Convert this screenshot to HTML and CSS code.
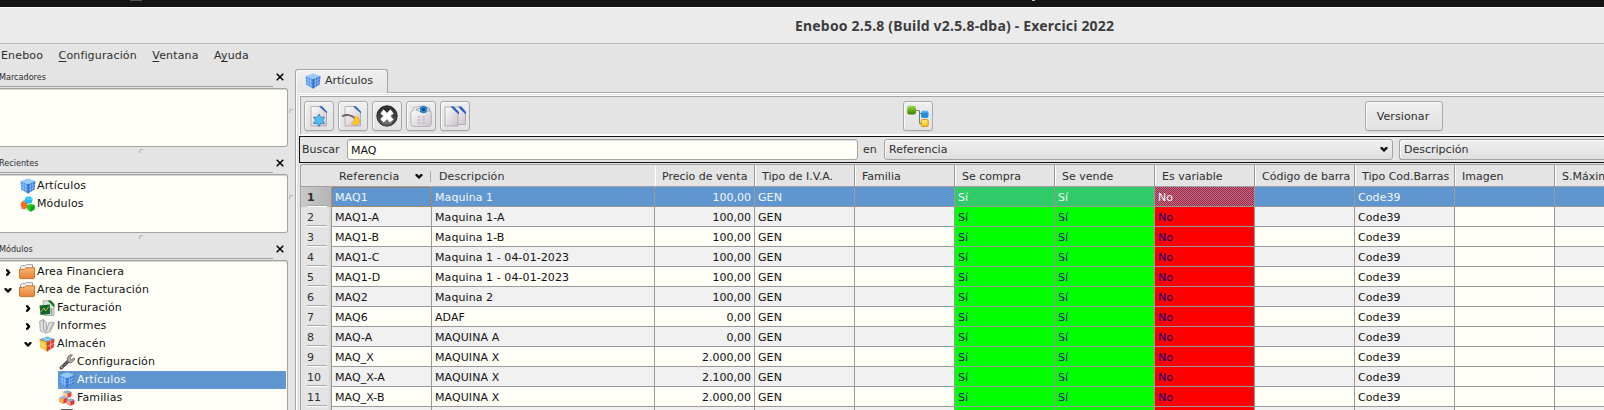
FILE: index.html
```html
<!DOCTYPE html>
<html lang="es">
<head>
<meta charset="utf-8">
<title>Eneboo 2.5.8</title>
<link rel="stylesheet" href="styles.css">
</head>
<body>
<svg class="defs" width="0" height="0">
  <defs>
    <linearGradient id="folderFill" x1="0" y1="0" x2="0" y2="1"><stop offset="0" stop-color="#f9b876"/><stop offset="1" stop-color="#e68033"/></linearGradient>
    <linearGradient id="pageFill" x1="0" y1="0" x2="1" y2="1"><stop offset="0" stop-color="#fdfbfd"/><stop offset="1" stop-color="#cbc3ca"/></linearGradient>
    <linearGradient id="foldFill" x1="0" y1="1" x2="1" y2="0"><stop offset="0" stop-color="#7fb2ee"/><stop offset=".5" stop-color="#1f56b4"/><stop offset="1" stop-color="#5b94dc"/></linearGradient>
    <radialGradient id="darkFill" cx=".5" cy=".8" r=".8"><stop offset="0" stop-color="#777"/><stop offset="1" stop-color="#161616"/></radialGradient>
    <linearGradient id="greenFill" x1="0" y1="0" x2="0" y2="1"><stop offset="0" stop-color="#a4dc5c"/><stop offset=".45" stop-color="#6bb31c"/><stop offset="1" stop-color="#3f7c08"/></linearGradient>
    <linearGradient id="blueFill" x1="0" y1="0" x2="0" y2="1"><stop offset="0" stop-color="#7cc4f2"/><stop offset=".45" stop-color="#1f8ada"/><stop offset="1" stop-color="#2795dc"/></linearGradient>
    <linearGradient id="yellowFill" x1="0" y1="0" x2="0" y2="1"><stop offset="0" stop-color="#fff27a"/><stop offset="1" stop-color="#f2c200"/></linearGradient>
    <symbol id="cube" viewBox="0 0 16 16">
      <path d="M.5 3.300 8 .5 15.500 3 8 6.300z" fill="#8cc8fb"/>
      <path d="M.5 3.300 8 6.300 8 15.500 1.300 11.800z" fill="#4f97ee"/>
      <path d="M15.500 3 8 6.300 8 15.500 14.600 11.500z" fill="#3a76d6"/>
      <path d="M2.900 4.300l.6 8.700M5.400 5.400l.4 8.900M.8 6.200l7.200 3L15.200 6M1 9l7 3.300L15 8.800M10.500 5.300l-.2 8.600M13 4.200l-.4 8.300M3.100 2.500 10.500 5.200M5.600 1.500l7.400 2.600M10.500 1.400 3 4.300M13 2.200 5.400 5.300" fill="none" stroke="#a5d0fb" stroke-width=".6"/>
      <path d="M8 6.300v9.200" stroke="#2559ae" stroke-width=".8"/>
    </symbol>
    <symbol id="cubecolor" viewBox="0 0 16 16">
      <path d="M.5 3.300 8 .5 15.500 3 8 6.300z" fill="#62b4ef"/>
      <path d="M.5 3.300 8 6.300 8 15.500 1.300 11.800z" fill="#f6c92c"/>
      <path d="M15.500 3 8 6.300 8 15.500 14.600 11.500z" fill="#e23a36"/>
      <path d="M4.300 5v8.500M1 7.600l7 3L15 7M11.700 4.700v8.600M4.500 2 11.500 4.700M12 2 4.300 5" fill="none" stroke="#f3e3c8" stroke-width=".6"/>
      <path d="M.5 3.300 8 6.300 15.500 3M8 6.300v9.200" fill="none" stroke="#8f4b24" stroke-width=".6"/>
    </symbol>
    <symbol id="modules" viewBox="0 0 16 16">
      <path d="M3 4.500 7.500 6.500 8 11.500 4.500 13.500 1.500 12.500.5 7.500z" fill="#f4712c"/>
      <path d="M6 .8 10.500.5 12.700 3 11.800 7 7.500 7.800 4 5z" fill="#1fc0f5"/>
      <path d="M6 .8 8 3.200 12.700 3" fill="none" stroke="#7ee2ff" stroke-width=".7"/>
      <path d="M7 9.500 10.500 7.800 14.700 9 14.500 13.500 10.500 15.800 7.200 13.500z" fill="#14cf21"/>
      <path d="M10.600 11 14.700 9 14.500 13.500 10.500 15.800z" fill="#0da51a"/>
    </symbol>
    <symbol id="folder" viewBox="0 0 16 16">
      <path d="M1.500 6V3l1-1.300h4l1.200-1H13.500V5" fill="#fdfdfd" stroke="#999" stroke-width="1"/>
      <path d="M.5 5.300H5.300l1.500-1.600h8.700v10.200l-.7.700H1.200l-.7-.7z" fill="url(#folderFill)" stroke="#c96a20" stroke-width=".9"/>
    </symbol>
    <symbol id="invoice" viewBox="0 0 16 16">
      <path d="M4 .8h7.500L15 4v11.500H5z" fill="#dce6dc" stroke="#8a988a" stroke-width=".7"/>
      <path d="M8.500.5h3.500L15.300 4v3.500z" fill="#19782a"/>
      <path d="M.5 5.500 11 4.500V14L1.500 15z" fill="#14662a"/>
      <path d="M1.500 12 5 8l1.500 3L10 6.500" fill="none" stroke="#b5c84b" stroke-width=".9"/>
      <path d="M12.500 8v6.500" stroke="#9aa69a" stroke-width="2"/>
    </symbol>
    <symbol id="book" viewBox="0 0 16 16">
      <path d="M.7 3 4.500 1.500 7.500 4.500v8L10 4.500l4.500-.5.8.8-4 8.700-4.300 1.700L1.300 13z" fill="#dedee0" stroke="#98989c" stroke-width=".8"/>
      <path d="M4.500 1.500v9.500L7.200 14.300M11 12l3.500-7" fill="none" stroke="#9b9ba0" stroke-width=".9"/>
    </symbol>
    <symbol id="wrench" viewBox="0 0 16 16">
      <path d="M2.200 13.800 9.500 7" stroke="#444" stroke-width="3.200" stroke-linecap="round"/>
      <path d="M3 13 10 6.500" stroke="#777" stroke-width="1"/>
      <path d="M13.500.8 10.500 1 8.200 4l.4 3.600L12 9l3.500-3-.2-2-3 1.700-1.200-1.600z" fill="#aaa" stroke="#666" stroke-width=".8"/>
      <circle cx="2.800" cy="13.300" r=".8" fill="#ddd"/>
    </symbol>
    <symbol id="families" viewBox="0 0 16 16">
      <path d="M4 2 8.500.5 12.500 2v4.500L8.500 8 4 6.500z" fill="#e44b42"/><path d="M4 2 8.500.5 12.500 2 8.500 3.500z" fill="#6dbdf2"/><path d="M4 2v4.500L8.500 8V3.500z" fill="#f9cfa0"/>
      <path d="M.5 7.500 4.500 6 8.500 7.500V12l-4 1.800-4-1.800z" fill="#dc3b3b"/><path d="M.5 7.500 4.500 6l4 1.500-4 1.500z" fill="#8cc3ee"/><path d="M.5 7.500V12l4 1.800V9z" fill="#f7b64b"/>
      <path d="M7.500 10 11.500 8.500 15.500 10v4l-4 1.700-4-1.700z" fill="#e03434"/><path d="M7.500 10 11.500 8.500l4 1.500-4 1.500z" fill="#72baf0"/><path d="M7.500 10v4l4 1.700v-4.200z" fill="#f4a19a"/>
    </symbol>
    <symbol id="partial" viewBox="0 0 16 16"><path d="M3 2h10v12H3z" fill="#bbb" stroke="#222" stroke-width="1.600"/></symbol>
    <symbol id="right" viewBox="0 0 7 7"><path d="M1.500.3h2L6 3.500 3.500 6.700H1.500V5.300L3.200 3.500 1.500 1.700z" fill="#000"/></symbol>
    <symbol id="down" viewBox="0 0 8 7"><path d="M.5 1h1.800L4 2.700 5.700 1h1.800v1.800L4 6 .5 2.800z" fill="#111"/></symbol>
    <symbol id="close" viewBox="0 0 8 8"><path d="M.7.7 7.300 7.300M7.300.7.700 7.300" stroke="#000" stroke-width="1.500"/></symbol>
    <symbol id="page" viewBox="0 0 22 22">
      <path d="M3 1.500h10.500l5 5v14.500H3z" fill="url(#pageFill)" stroke="#aaa2aa" stroke-width=".8"/>
      <path d="M11 1.200h3l5 5.500v1.500q-4-3-8-7z" fill="url(#foldFill)"/>
    </symbol>
  </defs>
</svg>

<div class="desktop-bar"><i class="notch"></i><i class="notch comma"></i></div>
<header class="titlebar"><span>Eneboo 2.5.8 (Build v2.5.8-dba) - Exercici 2022</span></header>

<div class="window">
  <aside class="docks">
    <nav class="menu"><span>Eneboo</span><span><u>C</u>onfiguración</span><span><u>V</u>entana</span><span>A<u>y</u>uda</span></nav>
    <section class="dock first">
      <div class="dock-title"><span>Marcadores</span><svg><use href="#close"/></svg></div>
      <div class="list"></div>
    </section>
    <section class="dock">
      <i class="grip"></i>
      <div class="dock-title"><span>Recientes</span><svg><use href="#close"/></svg></div>
      <div class="list">
        <div class="item recent"><svg><use href="#cube"/></svg><span>Artículos</span></div>
        <div class="item recent"><svg><use href="#modules"/></svg><span>Módulos</span></div>
      </div>
    </section>
    <section class="dock grow">
      <i class="grip"></i>
      <div class="dock-title"><span>Módulos</span><svg><use href="#close"/></svg></div>
      <div class="list tree">
        <div class="item"><svg class="arrow"><use href="#right"/></svg><svg><use href="#folder"/></svg><span>Area Financiera</span></div>
        <div class="item"><svg class="arrow"><use href="#down"/></svg><svg><use href="#folder"/></svg><span>Area de Facturación</span></div>
        <div class="item l1"><svg class="arrow"><use href="#right"/></svg><svg><use href="#invoice"/></svg><span>Facturación</span></div>
        <div class="item l1"><svg class="arrow"><use href="#right"/></svg><svg><use href="#book"/></svg><span>Informes</span></div>
        <div class="item l1"><svg class="arrow"><use href="#down"/></svg><svg><use href="#cubecolor"/></svg><span>Almacén</span></div>
        <div class="item l2"><svg><use href="#wrench"/></svg><span>Configuración</span></div>
        <div class="item l2 selected"><svg><use href="#cube"/></svg><span>Artículos</span></div>
        <div class="item l2"><svg><use href="#families"/></svg><span>Familias</span></div>
        <div class="item l2"><svg><use href="#partial"/></svg></div>
      </div>
    </section>
  </aside>
  <div class="splitter"><i class="grip"></i><i class="grip"></i></div>

  <main class="workspace">
    <div class="tabs"><div class="tab"><svg><use href="#cube"/></svg><span>Artículos</span></div><div class="tab-line"></div></div>
    <div class="pane">
      <div class="toolbar">
        <div class="tools">
          <div class="button"><svg viewBox="0 0 22 22"><use href="#page"/><path d="M11 9l1.800 3.300 3.700-.2-1.900 3.200 1.900 3.200-3.700-.2-1.800 3.200-1.800-3.200-3.700.2 1.900-3.200-1.900-3.200 3.700.2z" fill="#55bdf0" stroke="#1b72b8" stroke-width=".7"/></svg></div>
          <div class="button"><svg viewBox="0 0 22 22"><use href="#page"/><path d="M0 11.500q3-2 7-1.300 4 .7 6.500 3.800" fill="none" stroke="#6a625e" stroke-width="1.800"/><path d="M12.500 11.500q4.500 0 5 3.500t-2 4.500q-3.500 1.200-6.500-1 4-1 3.500-7z" fill="#ffc928" stroke="#d99a11" stroke-width=".6"/></svg></div>
          <div class="button"><svg viewBox="0 0 22 22"><circle cx="11" cy="11" r="10.200" fill="url(#darkFill)" stroke="#111" stroke-width=".8"/><circle cx="11" cy="11" r="8.800" fill="none" stroke="#555" stroke-width=".7"/><path d="M4.500 8.500 7.500 4.500 11 8 14.500 4.500 17.500 8.500 14.500 11 17.500 14.500 14 17.500 11 14.200 7.500 17.500 4.500 14 7.500 11z" fill="#fff" stroke="#ccc" stroke-width=".4"/></svg></div>
          <div class="button"><svg viewBox="0 0 22 22"><rect x=".8" y="5.500" width="20.500" height="16" rx="3" fill="url(#pageFill)" stroke="#b2aab1" stroke-width=".9"/><path d="M3 5.700V2.500q8-3 16 0v3.200" fill="#eee9ed" stroke="#b2aab1" stroke-width=".8"/><path d="M7.500 12h3m1.500 0h3M7.500 15h3m1.500 0h3M7.500 18h3m1.500 0h3" stroke="#b1a9b0" stroke-width=".9"/><path d="M6 4.500Q13 .5 20.500 5 13 10 6 4.500z" fill="#e9f3fb" stroke="#8c8c94" stroke-width=".8"/><circle cx="13.500" cy="4.500" r="3.700" fill="#2386d3"/><circle cx="13.500" cy="4.500" r="1.500" fill="#123666"/></svg></div>
          <div class="button"><svg viewBox="0 0 22 22"><path d="M8 2h8.500l5 5v12.500H8z" fill="url(#pageFill)" stroke="#aaa2aa" stroke-width=".8"/><path d="M14 1.500h3.500l4.500 5.500v2.500q-4-3-8-8z" fill="url(#foldFill)"/><path d="M1 2h8l5 5v14H1z" fill="url(#pageFill)" stroke="#aaa2aa" stroke-width=".8"/><path d="M6.500 1.500H10l5 5.500v2.500q-4-3-8.500-8z" fill="url(#foldFill)"/></svg></div>
        </div>
        <div class="button"><svg viewBox="0 0 22 22"><path d="M9 5.500h3.500v13H14M12.500 8.500H15" fill="none" stroke="#777" stroke-width="1"/><rect x=".3" y=".8" width="8.700" height="8.700" rx="2" fill="url(#greenFill)"/><rect x="14" y="5.500" width="7.500" height="7.500" rx="2" fill="url(#blueFill)"/><rect x="14.200" y="14.500" width="7" height="7" rx="1.500" fill="url(#yellowFill)" stroke="#d78a1c" stroke-width=".9"/></svg></div>
        <div class="button text">Versionar</div>
      </div>
      <div class="search">
        <label>Buscar</label>
        <div class="input">MAQ</div>
        <span class="in">en</span>
        <div class="select"><span>Referencia</span><svg class="arrow"><use href="#down"/></svg></div>
        <div class="select second"><span>Descripción</span></div>
      </div>
      <div class="grid-frame">
      <table>
        <colgroup><col class="cn"><col class="c"><col class="cd"><col class="c"><col class="c"><col class="c"><col class="c"><col class="c"><col class="c"><col class="c"><col class="c"><col class="c"><col class="c"></colgroup>
        <thead><tr><th class="corner"></th><th class="sorted"><div>Referencia<svg class="arrow"><use href="#down"/></svg></div></th><th class="nosep">Descripción</th><th>Precio de venta</th><th>Tipo de I.V.A.</th><th>Familia</th><th>Se compra</th><th>Se vende</th><th>Es variable</th><th>Código de barra</th><th>Tipo Cod.Barras</th><th>Imagen</th><th>S.Máximo</th></tr></thead>
        <tbody>
          <tr class="current"><th><b>1</b></th><td class="focus">MAQ1</td><td>Maquina 1</td><td class="num">100,00</td><td>GEN</td><td></td><td class="yes">Sí</td><td class="yes">Sí</td><td class="no">No</td><td></td><td>Code39</td><td></td><td></td></tr>
          <tr><th><b>2</b></th><td>MAQ1-A</td><td>Maquina 1-A</td><td class="num">100,00</td><td>GEN</td><td></td><td class="yes">Sí</td><td class="yes">Sí</td><td class="no">No</td><td></td><td>Code39</td><td class="img"></td><td></td></tr>
          <tr><th><b>3</b></th><td>MAQ1-B</td><td>Maquina 1-B</td><td class="num">100,00</td><td>GEN</td><td></td><td class="yes">Sí</td><td class="yes">Sí</td><td class="no">No</td><td></td><td>Code39</td><td class="img"></td><td></td></tr>
          <tr><th><b>4</b></th><td>MAQ1-C</td><td>Maquina 1 - 04-01-2023</td><td class="num">100,00</td><td>GEN</td><td></td><td class="yes">Sí</td><td class="yes">Sí</td><td class="no">No</td><td></td><td>Code39</td><td class="img"></td><td></td></tr>
          <tr><th><b>5</b></th><td>MAQ1-D</td><td>Maquina 1 - 04-01-2023</td><td class="num">100,00</td><td>GEN</td><td></td><td class="yes">Sí</td><td class="yes">Sí</td><td class="no">No</td><td></td><td>Code39</td><td class="img"></td><td></td></tr>
          <tr><th><b>6</b></th><td>MAQ2</td><td>Maquina 2</td><td class="num">100,00</td><td>GEN</td><td></td><td class="yes">Sí</td><td class="yes">Sí</td><td class="no">No</td><td></td><td>Code39</td><td class="img"></td><td></td></tr>
          <tr><th><b>7</b></th><td>MAQ6</td><td>ADAF</td><td class="num">0,00</td><td>GEN</td><td></td><td class="yes">Sí</td><td class="yes">Sí</td><td class="no">No</td><td></td><td>Code39</td><td class="img"></td><td></td></tr>
          <tr><th><b>8</b></th><td>MAQ-A</td><td>MAQUINA A</td><td class="num">0,00</td><td>GEN</td><td></td><td class="yes">Sí</td><td class="yes">Sí</td><td class="no">No</td><td></td><td>Code39</td><td class="img"></td><td></td></tr>
          <tr><th><b>9</b></th><td>MAQ_X</td><td>MAQUINA X</td><td class="num">2.000,00</td><td>GEN</td><td></td><td class="yes">Sí</td><td class="yes">Sí</td><td class="no">No</td><td></td><td>Code39</td><td class="img"></td><td></td></tr>
          <tr><th><b>10</b></th><td>MAQ_X-A</td><td>MAQUINA X</td><td class="num">2.100,00</td><td>GEN</td><td></td><td class="yes">Sí</td><td class="yes">Sí</td><td class="no">No</td><td></td><td>Code39</td><td class="img"></td><td></td></tr>
          <tr><th><b>11</b></th><td>MAQ_X-B</td><td>MAQUINA X</td><td class="num">2.000,00</td><td>GEN</td><td></td><td class="yes">Sí</td><td class="yes">Sí</td><td class="no">No</td><td></td><td>Code39</td><td class="img"></td><td></td></tr>
          <tr><th></th><td></td><td></td><td></td><td></td><td></td><td class="yes"></td><td class="yes"></td><td class="no"></td><td></td><td></td><td class="img"></td><td></td></tr>
        </tbody>
      </table>
      </div>
    </div>
  </main>
</div>
</body>
</html>
```
FILE: styles.css
```css
* { box-sizing: border-box; }
html, body { height: 410px; overflow: hidden; }
body {
  margin: 0;
  width: 1604px;
  display: flex;
  flex-direction: column;
  background: #e4e4e4;
  color: #2e2e2e;
  font: 11px/18px "DejaVu Sans", sans-serif;
  white-space: nowrap;
}
svg { display: block; flex: none; width: 16px; height: 16px; }
svg.arrow { width: 8px; height: 7px; }
.defs { position: absolute; width: 0; height: 0; }

.desktop-bar { height: 7px; background: #141414; display: flex; flex: none; padding-left: 130px; }
.notch { width: 12px; height: 1px; background: #555; }
.notch.comma { width: 3px; margin-left: 890px; background: #bbb; }
.titlebar {
  flex: none;
  height: 37px;
  padding-left: 795px;
  background: #ebebeb;
  border-top: 1px solid #fafafa;
  border-bottom: 1px solid #b9b9b9;
  color: #3d3d3d;
  font: bold 14px/36px "Noto Sans", sans-serif;
  letter-spacing: .19px;
}

.window { flex: 1; display: flex; min-height: 0; overflow: hidden; }
.docks { width: 288px; display: flex; flex-direction: column; flex: none; min-height: 0; }
.menu { height: 17px; margin-top: 3px; display: flex; padding-left: 1px; gap: 15.5px; line-height: 17px; letter-spacing: .15px; flex: none; }
.menu u { text-decoration-thickness: 1px; text-underline-offset: 2px; }

.dock { height: 86px; flex: none; display: flex; flex-direction: column; position: relative; }
.dock.first { height: 83px; }
.dock.grow { height: auto; flex: 1; min-height: 0; }
.dock-title { display: flex; justify-content: space-between; height: 26px; margin-bottom: 1px; padding: 8px 0 0; background: linear-gradient(#a0a0a0, #a0a0a0) 0 100% / 273px 1px no-repeat; flex: none; }
.dock.first .dock-title { height: 23px; padding-top: 5px; }
.dock-title span { font: 9px/16px "DejaVu Sans Condensed", "DejaVu Sans", sans-serif; letter-spacing: 0; margin-left: -1px; }
.dock-title svg { width: 8px; height: 8px; margin: 4px 4px 0 0; }
.list { flex: 1; min-height: 0; border: 1px solid #a3a3a3; border-left: 0; border-radius: 0 3px 3px 0; background: #fffff8; box-shadow: inset 0 1px #d5d5d2; padding-top: 2px; color: #111; letter-spacing: .13px; overflow: hidden; }
.list.tree { padding: 2px 1px 0 0; border-bottom: 0; border-radius: 0 3px 0 0; }
.item { height: 18px; display: flex; align-items: center; gap: 2px; padding-left: 4px; line-height: 18px; }
.item > .arrow { margin-right: 5px; }
.item.recent { padding-left: 20px; gap: 1px; }
.item.l1 { padding-left: 24px; }
.item.l2 { margin-left: 58px; padding-left: 1px; }
.item.selected { background: #6096cf; color: #f2f7fc; }
.grip { width: 5px; height: 5px; border: 1px solid #b4b4b4; border-right-color: transparent; border-bottom-color: transparent; border-radius: 50%; }
.dock > .grip { position: absolute; left: 139px; top: 2px; }
.splitter { width: 7px; flex: none; padding: 65px 0 0 1px; display: flex; flex-direction: column; gap: 81px; }

.workspace { flex: 1; min-width: 0; padding-top: 25px; }
.tabs { display: flex; height: 24px; }
.tab { width: 93px; display: flex; align-items: center; gap: 4px; padding-left: 9px; padding-bottom: 2px; border: 1px solid #a3a3a3; border-bottom: 0; border-radius: 3px 3px 0 0; background: linear-gradient(#f0f0f0, #e4e4e4); box-shadow: inset 1px 1px #fafafa; line-height: 20px; }
.tab-line { flex: 1; border-bottom: 1px solid #a8a8a8; }
.pane { height: 317px; border-left: 1px solid #a3a3a3; box-shadow: inset 1px 1px #fff; padding: 3px 0 0 3px; overflow: hidden; }

.toolbar { height: 39px; border: 1px solid #a3a3a3; border-right: 0; border-bottom-color: #fff; margin-left: 1px; outline: 1px solid #fff; display: flex; padding: 4px 0 0 3px; }
.tools { display: flex; gap: 4px; width: 599px; }
.button { width: 30px; height: 30px; border: 1px solid #a9a9a9; border-radius: 3px; background: linear-gradient(#eeeeee, #e2e2e2); box-shadow: inset 1px 1px #fafafa, 0 1px #d4d4d4; display: flex; align-items: center; justify-content: center; flex: none; }
.button svg { width: 22px; height: 22px; }
.button.text { width: 78px; margin-left: 432px; padding: 2px 2px 0 0; letter-spacing: .1px; }

.search { height: 27px; border: 1px solid #111; border-right: 0; display: flex; align-items: center; padding-left: 2px; margin-top: 1px; }
.search label { width: 45px; }
.input { width: 511px; height: 21px; line-height: 21px; border: 1px solid #a3a3a3; border-radius: 3px; background: #fffff8; padding-left: 3px; color: #111; box-shadow: inset 0 1px #ddd; }
.in { width: 26px; padding-left: 5px; }
.select { width: 509px; height: 21px; line-height: 18px; border: 1px solid #a3a3a3; border-radius: 3px; background: linear-gradient(#efefef, #dfdfdf); box-shadow: inset 1px 1px #fafafa; display: flex; align-items: center; justify-content: space-between; padding: 0 4px; }
.select.second { margin-left: 6px; border-right: 0; border-radius: 3px 0 0 3px; flex: 1; }

.grid-frame { margin: 1px 0 0 1px; border: 1px solid #a3a3a3; border-right: 0; border-bottom: 0; border-radius: 3px 0 0; overflow: hidden; height: 246px; }
table { table-layout: fixed; border-collapse: separate; border-spacing: 0; width: 1353px; }
.cn { width: 31px; }
.c { width: 100px; }
.cd { width: 223px; }
th, td { padding: 0; font-weight: normal; text-align: left; overflow: hidden; height: 20px; line-height: 17px; }
thead th { height: 22px; line-height: 19px; padding: 2px 0 0 7px; border-right: 1px solid #999; border-bottom: 1px solid #a0a0a0; box-shadow: inset 1px 0 #fff; }
thead .corner { border-right-color: transparent; box-shadow: none; }
thead .sorted { border-right-color: transparent; box-shadow: none; background: linear-gradient(#aaa, #aaa) 98px 6px / 1px 11px no-repeat; }
thead .sorted div { display: flex; justify-content: space-between; align-items: center; padding-right: 8px; letter-spacing: .2px; }
thead .nosep { box-shadow: none; border-right-color: transparent; letter-spacing: .1px; }
td { border-right: 1px solid #999; border-bottom: 1px solid #999; padding: 2px 0 0 3px; color: #111; background: #fffff8; letter-spacing: .08px; }
tr:nth-child(even) td { background: #f1f1f1; }
tbody tr td.img { background: #fffff8; }
td.num { text-align: right; padding-right: 3px; letter-spacing: 0; }
tbody tr td.yes { background: #00ff00; color: #000080; }
tbody tr td.no { background: #ff0000; color: #000080; }
tbody th { border-right: 1px solid #999; padding-left: 6px; background: linear-gradient(90deg, transparent 27px, #cfcfcf); }
tbody th b { display: block; width: 20px; height: 20px; padding-top: 2px; font-weight: normal; border-bottom: 1px solid #fff; box-shadow: inset 0 -1px #a8a8a8; }
.current th { background: linear-gradient(90deg, #c9c9c9, #b5b5b5); }
.current th b { font-weight: bold; }
tbody tr.current td { background: #6096cf; color: #f2f7fc; }
tbody tr.current td.focus { outline: 1px dotted #b0763a; outline-offset: -1px; }
/* Selection stipple: alternating pixels of the cell colour over the highlight. */
tbody tr.current td.yes,
tbody tr.current td.no { background: #6096cf 0 0 / 2px 2px; image-rendering: pixelated; }
tbody tr.current td.yes { background-image: url("data:image/svg+xml,%3Csvg xmlns='http://www.w3.org/2000/svg' width='2' height='2' shape-rendering='crispEdges'%3E%3Cpath d='M0 0h1v1H0zM1 1h1v1H1z' fill='%2300ff00'/%3E%3C/svg%3E"); }
tbody tr.current td.no { background-image: url("data:image/svg+xml,%3Csvg xmlns='http://www.w3.org/2000/svg' width='2' height='2' shape-rendering='crispEdges'%3E%3Cpath d='M0 0h1v1H0zM1 1h1v1H1z' fill='%23ff0000'/%3E%3C/svg%3E"); }
```
